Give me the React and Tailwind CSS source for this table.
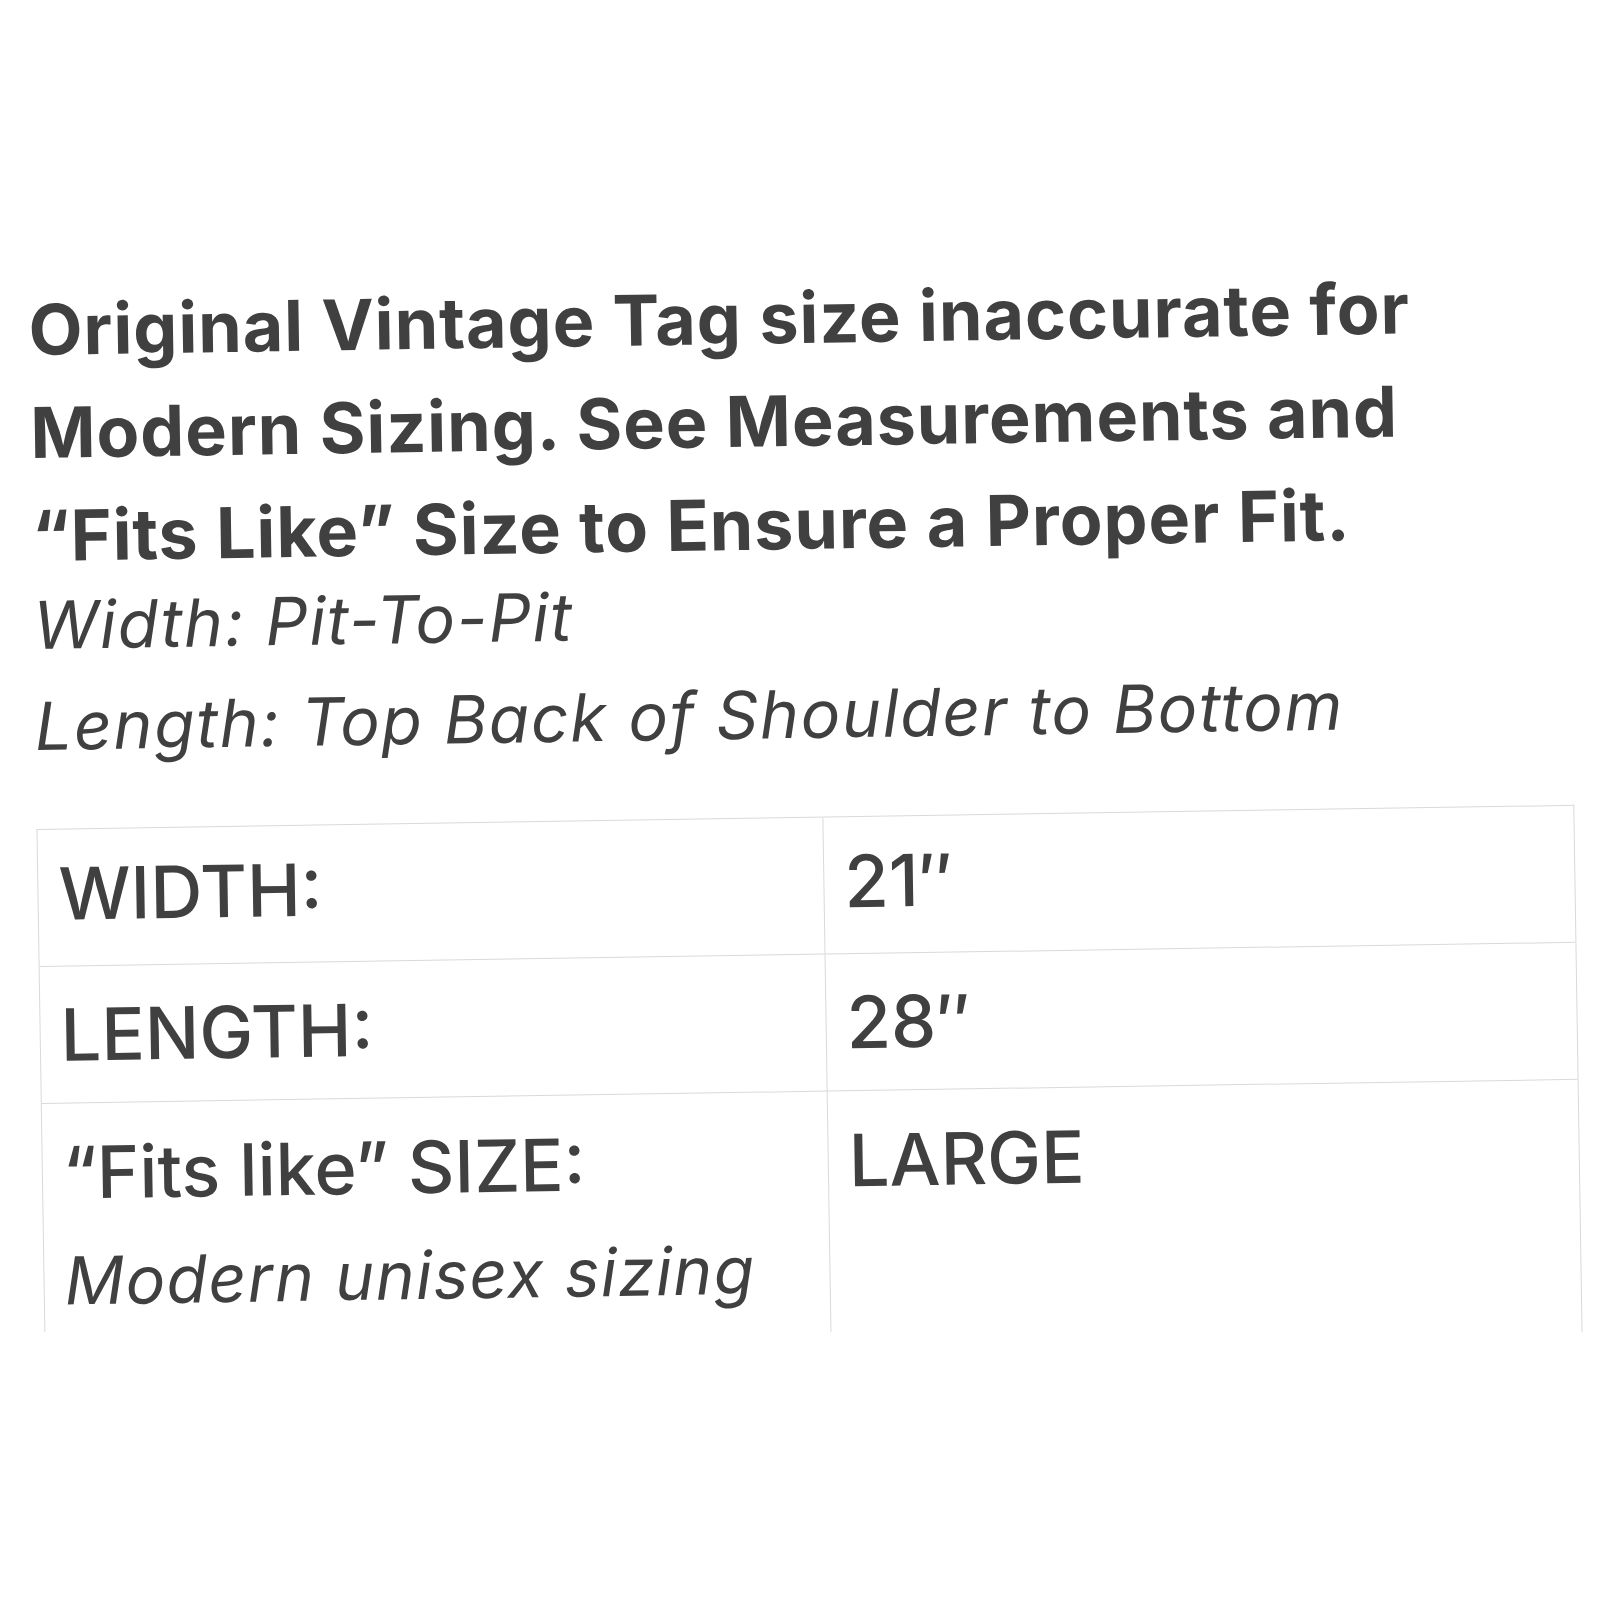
export default function App() {
  const font = { fontFamily: "Inter, 'Liberation Sans', sans-serif" };
  return (
    <div className="w-[1600px] h-[1600px] bg-white overflow-hidden relative" style={font}>
      <div className="h-[1332px] overflow-hidden">
        <div className="origin-[36px_800px] -rotate-[0.9deg] pl-[36px] pt-[278px] text-[#404040]">
          <div className="font-bold text-[70px] leading-[103px] tracking-[0.9px]">
            <div>Original Vintage Tag size inaccurate for</div>
            <div>Modern Sizing. See Measurements and</div>
            <div>“Fits Like” Size to Ensure a Proper Fit.</div>
          </div>
          <div className="italic font-normal text-[66px] leading-[101px] mt-[-12px] tracking-[1.65px]">
            <div>Width: Pit-To-Pit</div>
            <div>Length: Top Back of Shoulder to Bottom</div>
          </div>
          <div className="mt-[52px] w-[1538px] border-l border-t border-r border-[#d9d9d9] grid grid-cols-[786px_1fr] grid-rows-[137px_137px_300px]">
            <div className="border-r border-b border-[#d9d9d9] pl-[20px] pt-[24px] text-[72px] leading-[80px] font-medium">WIDTH:</div>
            <div className="border-b border-[#d9d9d9] pl-[20px] pt-[24px] text-[72px] leading-[80px] font-medium">21″</div>
            <div className="border-r border-b border-[#d9d9d9] pl-[20px] pt-[28px] text-[72px] leading-[80px] font-medium">LENGTH:</div>
            <div className="border-b border-[#d9d9d9] pl-[20px] pt-[28px] text-[72px] leading-[80px] font-medium">28″</div>
            <div className="border-r border-[#d9d9d9] pl-[20px] pt-[29px]">
              <div className="text-[72px] leading-[80px] font-medium">“Fits like” SIZE:</div>
              <div className="italic text-[66px] leading-[104px] mt-[16px] tracking-[1.35px]">Modern unisex sizing</div>
            </div>
            <div className="pl-[20px] pt-[29px] text-[72px] leading-[80px] font-medium">LARGE</div>
          </div>
        </div>
      </div>
    </div>
  );
}
